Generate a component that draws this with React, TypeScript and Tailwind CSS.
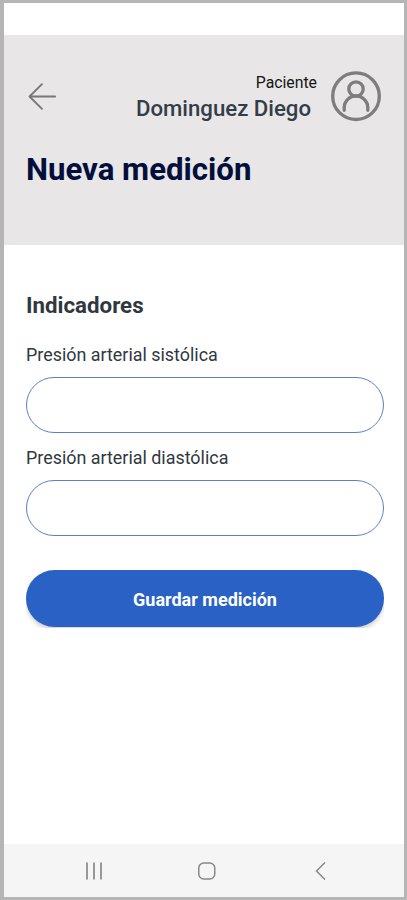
import { useState } from 'react';

interface FieldProps {
    id: string;
    label: string;
}

function Field({ id, label }: FieldProps) {
    const [value, setValue] = useState('');

    return (
        <div className="flex flex-col">
            <label htmlFor={id} className="h-6 text-[17.9px] leading-6 text-[#30383f] whitespace-nowrap">
                {label}
            </label>
            <input
                id={id}
                inputMode="numeric"
                value={value}
                onChange={(e) => setValue(e.target.value)}
                className="mt-[10px] h-14 w-full rounded-[28px] border border-[#5b80c4] bg-white px-6 text-lg outline-none"
            />
        </div>
    );
}

function Header() {
    return (
        <header className="h-[210px] bg-[#e8e6e7] pl-[22px] pr-[22px] pt-9">
            <div className="flex h-[51px] items-center">
                <button type="button" aria-label="Volver" className="ml-[2px]">
                    <svg width="30" height="28" viewBox="0 0 30 28" fill="none" stroke="#777777" strokeWidth="1.8" strokeLinecap="round" strokeLinejoin="round">
                        <path d="M27.2 13.5H1.5M14 1.2 1.5 13.5 14 25.8" />
                    </svg>
                </button>
                <div className="ml-auto mr-[14px] flex flex-col items-end pt-[3px] whitespace-nowrap">
                    <span className="text-[15.8px] leading-5 text-[#151515]">Paciente</span>
                    <span className="mr-[6px] text-[22.2px] font-medium leading-[31px] text-[#333d48]">Dominguez Diego</span>
                </div>
                <svg width="51" height="51" viewBox="0 0 51 51" fill="none" stroke="#7d7d7d" strokeWidth="3.3" strokeLinecap="round">
                    <circle cx="25" cy="25.2" r="23.3" />
                    <circle cx="25" cy="18" r="7.2" />
                    <path d="M13.2 39.3V36.7a11.8 11.8 0 0 1 23.6 0v2.6" />
                </svg>
            </div>
            <h1 className="mt-7 text-[31.2px] font-bold leading-10 text-[#020f3a] whitespace-nowrap">Nueva medición</h1>
        </header>
    );
}

function NavigationBar() {
    return (
        <nav className="grid h-[53px] grid-cols-[180px_45px_183px] items-center justify-items-center bg-[#f5f5f5]">
            <svg width="18" height="18" viewBox="0 0 18 18" stroke="#888888" strokeWidth="1.7">
                <path d="M2 .5v17M9 .5v17M16 .5v17" />
            </svg>
            <svg width="18" height="18" viewBox="0 0 18 18" fill="none" stroke="#888888" strokeWidth="1.5">
                <rect x=".75" y="1" width="16" height="16" rx="5" />
            </svg>
            <svg width="11" height="18" viewBox="0 0 11 18" fill="none" stroke="#888888" strokeWidth="1.5">
                <path d="M10 .5 1.5 9l8.5 8.5" />
            </svg>
        </nav>
    );
}

export default function App() {
    return (
        <div className="flex h-[900px] w-[407px] flex-col overflow-hidden border-y-[3px] border-l-4 border-r-[3px] border-[#b5b5b5] bg-white font-[Roboto,sans-serif]">
            <div className="h-8 shrink-0" />
            <Header />
            <main className="flex-1 pl-[22px] pr-5 pt-11">
                <h2 className="text-[22.3px] font-bold leading-8 text-[#30383f]">Indicadores</h2>
                <div className="mt-[22px] flex flex-col gap-[13px]">
                    <Field id="sistolica" label="Presión arterial sistólica" />
                    <Field id="diastolica" label="Presión arterial diastólica" />
                </div>
                <div className="mt-[34px] h-[58px] overflow-hidden">
                    <button
                        type="button"
                        className="h-[57px] w-full rounded-[28.5px] bg-[#2961c5] pt-[3px] text-lg font-bold text-white shadow-[0_3px_4px_rgba(0,0,0,0.18)]"
                    >
                        Guardar medición
                    </button>
                </div>
            </main>
            <NavigationBar />
        </div>
    );
}
